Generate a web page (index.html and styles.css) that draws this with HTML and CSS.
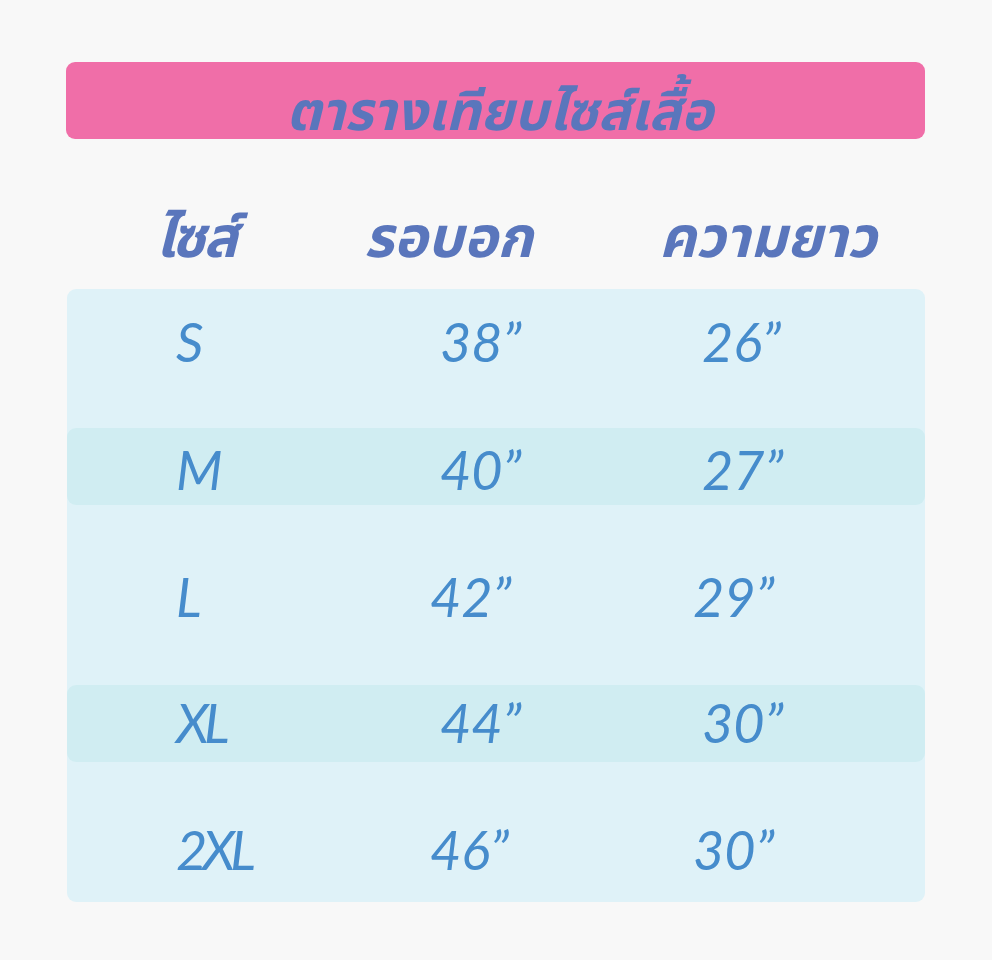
FILE: index.html
```html
<!DOCTYPE html>
<html lang="th">
<head>
<meta charset="utf-8">
<title>ตารางเทียบไซส์เสื้อ</title>
<link rel="stylesheet" href="styles.css">
</head>
<body>
<main class="chart">
  <header class="banner"><h1 class="banner__title">ตารางเทียบไซส์เสื้อ</h1></header>
  <div class="heads">
    <span class="head head--size">ไซส์</span>
    <span class="head head--chest">รอบอก</span>
    <span class="head head--length">ความยาว</span>
  </div>
  <section class="table">
    <div class="row row--s"><span class="cell cell--size">S</span><span class="cell cell--chest">38”</span><span class="cell cell--length">26”</span></div>
    <div class="row row--m row--band"><span class="cell cell--size">M</span><span class="cell cell--chest">40”</span><span class="cell cell--length">27”</span></div>
    <div class="row row--l row--shift"><span class="cell cell--size">L</span><span class="cell cell--chest">42”</span><span class="cell cell--length">29”</span></div>
    <div class="row row--xl row--band"><span class="cell cell--size">XL</span><span class="cell cell--chest">44”</span><span class="cell cell--length">30”</span></div>
    <div class="row row--xxl row--shift"><span class="cell cell--size">2XL</span><span class="cell cell--chest">46”</span><span class="cell cell--length">30”</span></div>
  </section>
</main>
</body>
</html>
```
FILE: styles.css
```css
html, body { margin: 0; padding: 0; }
body {
  background: #f8f8f8;
  font-family: "Noto Sans Thai", "Noto Sans", "DejaVu Sans", sans-serif;
  width: 992px;
  height: 960px;
  overflow: hidden;
}
.chart {
  padding: 62px 67px 0 66px;
  display: flex;
  flex-direction: column;
}
.banner {
  height: 77px;
  background: #f06ea8;
  border-radius: 9px;
  display: flex;
  align-items: center;
  justify-content: center;
}
.banner__title {
  margin: 0;
  color: #5a76bc;
  font-size: 54px;
  font-weight: 700;
  font-style: italic;
  line-height: 1;
  padding-top: 26px;
  padding-left: 8px;
}
.heads {
  height: 150px;
  box-sizing: border-box;
  padding-top: 52px;
  display: grid;
  grid-template-columns: 298px 295px 1fr;
  align-items: center;
  color: #5a76bc;
  font-size: 57px;
  font-weight: 700;
  font-style: italic;
  line-height: 1;
}
.head--size { padding-left: 89px; letter-spacing: -2px; }
.head--chest { padding-left: 0; }
.head--length { padding-left: 0; }
.table {
  background: #dff2f8;
  border-radius: 9px;
  margin-left: 1px;
  display: flex;
  flex-direction: column;
  height: 613px;
}
.row {
  display: grid;
  grid-template-columns: 373px 262px 1fr;
  color: #468ccc;
  font-family: "Lato", "Noto Sans", sans-serif;
  font-style: italic;
  font-size: 54px;
  line-height: 1;
  box-sizing: border-box;
}
.row--band { background: #d0edf2; border-radius: 9px; }
.row--s { height: 139px; padding-top: 26px; }
.row--m { height: 77px; padding-top: 15px; }
.row--l { height: 180px; padding-top: 65px; }
.row--xl { height: 77px; padding-top: 11px; }
.row--xxl { height: 140px; padding-top: 61px; }
.cell--size { padding-left: 109px; letter-spacing: -5px; }
.row--shift .cell--chest { margin-left: -10px; }
.row--shift .cell--length { margin-left: -9px; }
```
